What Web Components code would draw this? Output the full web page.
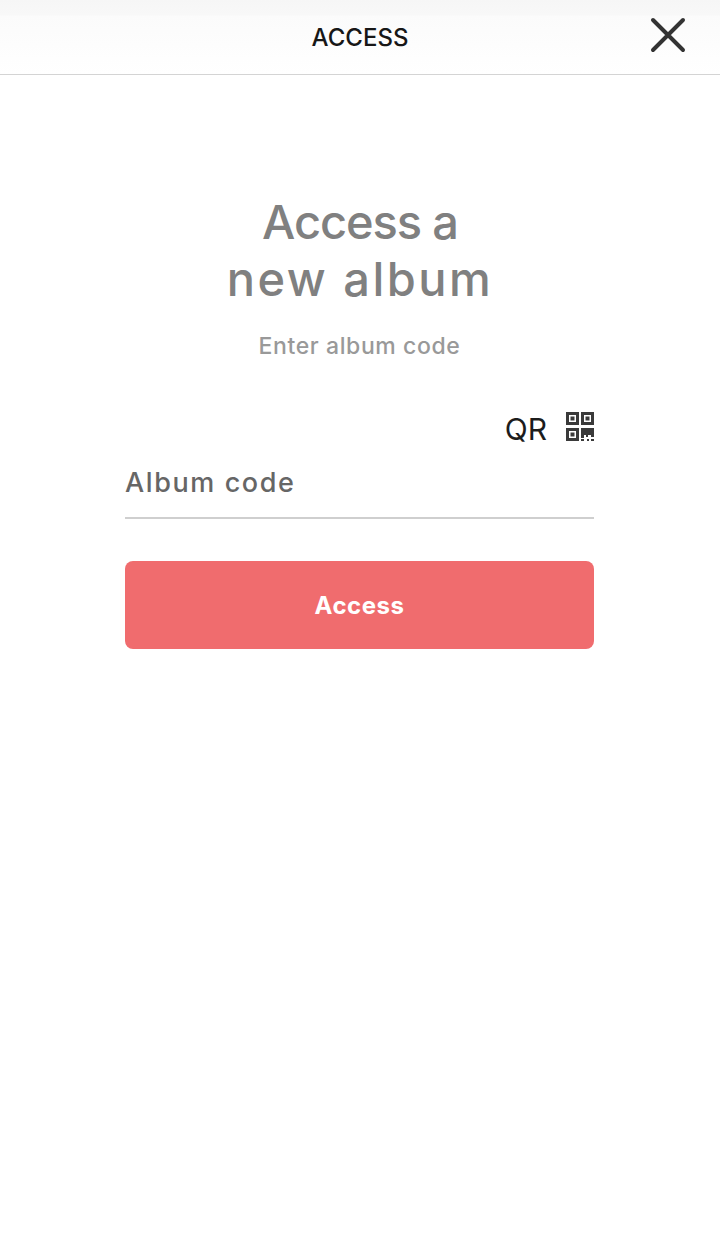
<!DOCTYPE html>
<html lang="en">
<head>
<meta charset="UTF-8">
<title>Access</title>
<style>
  html, body { margin: 0; background: #fff; }
  body { font-family: Inter, "Liberation Sans", sans-serif; }
</style>
</head>
<body>
<access-screen>
  <top-bar slot="bar">ACCESS</top-bar>
  <code-form></code-form>
</access-screen>
<script>
  class AccessScreen extends HTMLElement {
    constructor() {
      super();
      this.attachShadow({ mode: 'open' });
      this.shadowRoot.innerHTML = `
        <style>
          :host { display: block; width: 720px; height: 1244px; background: #fff; overflow: hidden; }
        </style>
        <slot name="bar"></slot>
        <slot></slot>
      `;
    }
  }

  class TopBar extends HTMLElement {
    constructor() {
      super();
      this.attachShadow({ mode: 'open' });
      this.shadowRoot.innerHTML = `
        <style>
          :host {
            display: flex;
            align-items: center;
            justify-content: center;
            position: relative;
            box-sizing: border-box;
            height: 75px;
            border-bottom: 1px solid #d4d4d4;
            background: linear-gradient(#f6f6f6 0, #f8f8f8 15px, #fbfbfb 16px, #fff 74px);
            color: #171717;
            font-size: 24px;
            font-weight: 500;
          }
          button {
            position: absolute;
            right: 32px;
            top: 15px;
            width: 40px;
            height: 40px;
            padding: 0;
            border: 0;
            background: none;
          }
          svg { display: block; }
        </style>
        <slot></slot>
        <button aria-label="Close">
          <svg width="40" height="40" viewBox="0 0 40 40">
            <path d="M5 5 L35 35 M35 5 L5 35" stroke="#333" stroke-width="4" stroke-linecap="round" fill="none"/>
          </svg>
        </button>
      `;
    }
  }

  class CodeForm extends HTMLElement {
    constructor() {
      super();
      this.attachShadow({ mode: 'open' });
      this.shadowRoot.innerHTML = `
        <style>
          :host {
            display: flex;
            flex-direction: column;
            box-sizing: border-box;
            width: 469px;
            margin-left: 125px;
            padding-top: 118px;
            color: #808080;
          }
          h1 {
            margin: 0;
            font-size: 47px;
            line-height: 57px;
            font-weight: 500;
            text-align: center;
          }
          h1 .one { letter-spacing: -1.1px; margin-left: 1px; }
          h1 .two { letter-spacing: 2.5px; margin-left: 1px; }
          p {
            margin: 24px 0 0;
            font-size: 23px;
            line-height: 30px;
            font-weight: 500;
            letter-spacing: 0.6px;
            color: #999;
            text-align: center;
          }
          .qr {
            display: flex;
            justify-content: flex-end;
            align-items: center;
            gap: 18px;
            margin-top: 50px;
            height: 36px;
            color: #1c1c1c;
            font-size: 30px;
            font-weight: 400;
          }
          .qr svg { display: block; margin-top: -4px; margin-right: -1px; }
          .label {
            margin-top: 18px;
            height: 54px;
            box-sizing: border-box;
            border-bottom: 2px solid #cfcfcf;
            color: #666;
            font-size: 27px;
            line-height: 36px;
            font-weight: 500;
            letter-spacing: 1.6px;
          }
          button {
            display: block;
            margin-top: 42px;
            width: 100%;
            height: 88px;
            padding: 1px 0 0;
            border: 0;
            border-radius: 8px;
            background: #f06c6e;
            color: #fff;
            font: 700 24px Inter, "Liberation Sans", sans-serif;
            letter-spacing: 0.5px;
          }
        </style>
        <h1><span class="one">Access a</span><br><span class="two">new album</span></h1>
        <p>Enter album code</p>
        <div class="qr">
          <span>QR</span>
          <svg width="30" height="30" viewBox="0 0 30 30" fill="#3a3a3a">
            <path fill-rule="evenodd" d="M1 0h13v13H1z M4 3v7h7V3z"/>
            <path d="M5.5 4.5h4v4h-4z"/>
            <path fill-rule="evenodd" d="M16 0h13v13H16z M19 3v7h7V3z"/>
            <path d="M20.5 4.5h4v4h-4z"/>
            <path fill-rule="evenodd" d="M1 16h13v13H1z M4 19v7h7v-7z"/>
            <path d="M5.5 20.5h4v4h-4z"/>
            <path d="M16 16h13v9h-3v-2h-3v2h-2v-2h-2v3h-3z"/>
            <path d="M16 27h3v2h-3z M22 27h2v2h-2z M26 27h3v2h-3z"/>
          </svg>
        </div>
        <div class="label">Album code</div>
        <button>Access</button>
      `;
    }
  }

  customElements.define('access-screen', AccessScreen);
  customElements.define('top-bar', TopBar);
  customElements.define('code-form', CodeForm);
</script>
</body>
</html>
